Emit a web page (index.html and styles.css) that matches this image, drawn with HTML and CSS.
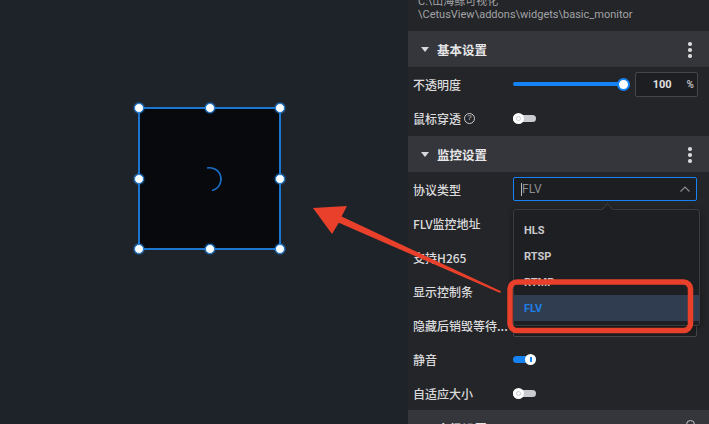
FILE: index.html
```html
<!DOCTYPE html>
<html lang="zh-CN">
<head>
<meta charset="utf-8">
<link rel="stylesheet" href="styles.css">
</head>
<body>
<div class="app">
  <div class="stage">
    <div class="widget">
      <svg class="spinner" width="30" height="30" viewBox="0 0 30 30"><path d="M12 4 A11.5 11.5 0 0 1 17 26.5" fill="none" stroke="#1a6fc6" stroke-width="1.6"/></svg>
      <span class="handle h-tl"></span><span class="handle h-tc"></span><span class="handle h-tr"></span>
      <span class="handle h-ml"></span><span class="handle h-mr"></span>
      <span class="handle h-bl"></span><span class="handle h-bc"></span><span class="handle h-br"></span>
    </div>
  </div>
  <div class="panel">
    <div class="path">C:\山海鲸可视化<br>\CetusView\addons\widgets\basic_monitor</div>
    <div class="section-head">
      <span class="tri"></span><span class="head-title">基本设置</span>
      <span class="kebab"><i></i><i></i><i></i></span>
    </div>
    <div class="group group-basic">
      <div class="row">
        <span class="label">不透明度</span>
        <div class="ctrl slider-ctrl">
          <div class="slider"><div class="track"></div><div class="thumb"></div></div>
          <div class="num"><span class="num-val">100</span><span class="num-unit">%</span></div>
        </div>
      </div>
      <div class="row">
        <span class="label">鼠标穿透 <span class="qmark">?</span></span>
        <div class="ctrl"><span class="toggle off"><span class="knob"></span></span></div>
      </div>
    </div>
    <div class="section-head">
      <span class="tri"></span><span class="head-title">监控设置</span>
      <span class="kebab"><i></i><i></i><i></i></span>
    </div>
    <div class="group">
      <div class="row">
        <span class="label">协议类型</span>
        <div class="ctrl">
          <div class="select"><span class="caret"></span><span class="sel-val">FLV</span>
            <svg class="chev" width="10" height="6" viewBox="0 0 10 6"><path d="M0.5 5.5 L5 1 L9.5 5.5" fill="none" stroke="#8a8b8f" stroke-width="1.2"/></svg>
          </div>
        </div>
      </div>
      <div class="row"><span class="label">FLV监控地址</span></div>
      <div class="row"><span class="label">支持H265</span></div>
      <div class="row"><span class="label">显示控制条</span></div>
      <div class="row">
        <span class="label">隐藏后销毁等待...</span>
        <div class="ctrl"><div class="textbox"></div></div>
      </div>
      <div class="row">
        <span class="label">静音</span>
        <div class="ctrl"><span class="toggle on"><span class="knob"></span></span></div>
      </div>
      <div class="row">
        <span class="label">自适应大小</span>
        <div class="ctrl"><span class="toggle off"><span class="knob"></span></span></div>
      </div>
    </div>
    <div class="section-head">
      <span class="tri"></span><span class="head-title">高级设置</span>
      <span class="ring"></span>
    </div>

    <div class="dropdown">
      <div class="item">HLS</div>
      <div class="item">RTSP</div>
      <div class="item">RTMP</div>
      <div class="item active">FLV</div>
    </div>
  </div>

  <svg class="annot" width="709" height="424" viewBox="0 0 709 424">
    <polygon points="313,208 347,206 341.6,216.6 501,291.3 500.2,293.1 338.8,222.8 332,234" fill="#e8402a"/>
    <rect x="510" y="282" width="180.5" height="48.5" rx="7" ry="7" fill="none" stroke="#e8402a" stroke-width="5.5"/>
  </svg>
</div>
</body>
</html>
```

FILE: styles.css
```css
* { box-sizing: border-box; }
html, body { margin: 0; padding: 0; }
body {
  width: 709px;
  height: 424px;
  overflow: hidden;
  background: #1e232a;
  font-family: "Noto Sans CJK SC", "Noto Sans", sans-serif;
}
.app {
  position: relative;
  display: flex;
  width: 709px;
  height: 424px;
}
.stage {
  position: relative;
  width: 408px;
  height: 424px;
  background: #1e232a;
}
.widget {
  position: absolute;
  left: 138px;
  top: 107px;
  width: 143px;
  height: 143px;
  background: #07090c;
  border: 2px solid #1c76cf;
}
.spinner {
  position: absolute;
  left: 55px;
  top: 55px;
}
.handle {
  position: absolute;
  width: 10px;
  height: 10px;
  border-radius: 50%;
  background: #fff;
  border: 1.5px solid #1c76cf;
  box-shadow: 0 0 2px #2a8ae8;
  margin: -5px 0 0 -5px;
}
.h-tl { left: -1px; top: -1px; }
.h-tc { left: 50%; top: -1px; }
.h-tr { left: calc(100% + 1px); top: -1px; }
.h-ml { left: -1px; top: 50%; }
.h-mr { left: calc(100% + 1px); top: 50%; }
.h-bl { left: -1px; top: calc(100% + 1px); }
.h-bc { left: 50%; top: calc(100% + 1px); }
.h-br { left: calc(100% + 1px); top: calc(100% + 1px); }

.panel {
  position: relative;
  width: 301px;
  height: 424px;
  overflow: hidden;
  background: #242528;
  display: flex;
  flex-direction: column;
}
.panel > * { flex: none; }
.path {
  padding: 0 10px;
  margin-top: -4px;
  height: 35px;
  font-family: "Roboto", "Noto Sans CJK SC", sans-serif;
  font-size: 11px;
  line-height: 12.5px;
  color: #a2a3a6;
}
.section-head {
  position: relative;
  height: 36px;
  background: #35363b;
  display: flex;
  align-items: center;
  padding-left: 13px;
}
.tri {
  width: 0;
  height: 0;
  border-left: 4.5px solid transparent;
  border-right: 4.5px solid transparent;
  border-top: 5px solid #d9d9db;
  margin-right: 8px;
}
.head-title {
  font-size: 12.5px;
  font-weight: 700;
  color: #e6e6e8;
}
.kebab {
  position: absolute;
  right: 17px;
  top: 11px;
  width: 4px;
  display: flex;
  flex-direction: column;
  gap: 2.5px;
}
.kebab i {
  display: block;
  width: 3.5px;
  height: 3.5px;
  border-radius: 50%;
  background: #d8d8da;
}
.ring {
  position: absolute;
  right: 14px;
  top: 10px;
  width: 9px;
  height: 9px;
  border: 1.5px solid #c8c8cb;
  border-radius: 50%;
}
.group { display: flex; flex-direction: column; }
.group > * { flex: none; }
.group-basic { padding-bottom: 1px; }
.row {
  height: 34px;
  display: flex;
  align-items: center;
  padding-left: 5px;
}
.label {
  width: 100px;
  flex: none;
  font-size: 12px;
  font-weight: 500;
  color: #dadadc;
  white-space: nowrap;
  display: flex;
  align-items: center;
}
.qmark {
  display: inline-flex;
  align-items: center;
  justify-content: center;
  width: 11px;
  height: 11px;
  margin-left: 3px;
  border: 1px solid #cfcfd2;
  border-radius: 50%;
  font-family: "Liberation Sans", sans-serif;
  font-size: 8px;
  line-height: 1;
  color: #cfcfd2;
}
.ctrl {
  flex: 1;
  display: flex;
  align-items: center;
  padding-right: 12px;
}
.slider-ctrl { gap: 4px; }
.slider {
  position: relative;
  width: 117px;
  height: 12px;
}
.track {
  position: absolute;
  left: 0;
  right: 6px;
  top: 4px;
  height: 4px;
  border-radius: 2px;
  background: #1683f5;
}
.thumb {
  position: absolute;
  right: 0;
  top: -0.5px;
  width: 13px;
  height: 13px;
  border-radius: 50%;
  background: #fff;
  border: 2px solid #1683f5;
}
.num {
  margin-left: 1px;
  width: 63px;
  height: 25px;
  border: 1px solid #45464b;
  border-radius: 2px;
  background: #1d1e21;
  display: flex;
  align-items: center;
  justify-content: flex-end;
  padding-right: 3px;
  font-family: "Roboto", sans-serif;
  font-size: 11px;
  font-weight: 700;
  color: #e0e0e2;
}
.num-val { margin-right: 15px; }
.num-unit { color: #b8b8bb; font-size: 10px; }
.toggle {
  position: relative;
  display: inline-block;
  width: 23px;
  height: 7px;
  border-radius: 4px;
  background: #c9cbd0;
}
.toggle .knob {
  position: absolute;
  top: -2px;
  width: 11px;
  height: 11px;
  border-radius: 50%;
  background: #fff;
}
.toggle.off .knob { left: 0; }
.toggle.off .knob::after {
  content: "";
  position: absolute;
  left: 3px;
  top: 3px;
  width: 5px;
  height: 5px;
  border-radius: 50%;
  border: 1px solid #c9cbd0;
  box-sizing: border-box;
}
.toggle.on { background: #1683f5; }
.toggle.on .knob { right: 0; }
.toggle.on .knob::after {
  content: "";
  position: absolute;
  left: 5px;
  top: 3px;
  width: 1.5px;
  height: 5px;
  background: #1683f5;
}
.select {
  position: relative;
  width: 184px;
  height: 24px;
  border: 1px solid #1683f5;
  border-radius: 2px;
  background: #1d1e21;
  display: flex;
  align-items: center;
  padding-left: 7px;
  font-family: "Roboto", sans-serif;
  font-size: 12px;
  color: #8d8e92;
}
.caret {
  width: 1px;
  height: 13px;
  background: #b9b9bc;
}
.chev {
  position: absolute;
  right: 6px;
  top: 8px;
}
.textbox {
  width: 184px;
  height: 24px;
  border: 1px solid #45464b;
  border-radius: 2px;
  background: #1d1e21;
}
.dropdown {
  position: absolute;
  left: 105px;
  top: 209px;
  width: 187px;
  height: 117px;
  padding: 7px 0 5px;
  background: #1e1f22;
  border: 1px solid #3b3c41;
  border-radius: 3px;
  box-shadow: 0 2px 6px rgba(0,0,0,0.4);
}
.dropdown::before {
  content: "";
  position: absolute;
  left: 89px;
  top: -5px;
  width: 8px;
  height: 8px;
  background: #1e1f22;
  border-left: 1px solid #3b3c41;
  border-top: 1px solid #3b3c41;
  transform: rotate(45deg);
}
.item {
  height: 26px;
  display: flex;
  align-items: center;
  padding-left: 10px;
  font-family: "Roboto", sans-serif;
  font-size: 11px;
  font-weight: 700;
  color: #c9c9cc;
}
.item.active {
  background: #303d50;
  color: #1f7ee6;
}
.annot {
  position: absolute;
  left: 0;
  top: 0;
  pointer-events: none;
}
```
